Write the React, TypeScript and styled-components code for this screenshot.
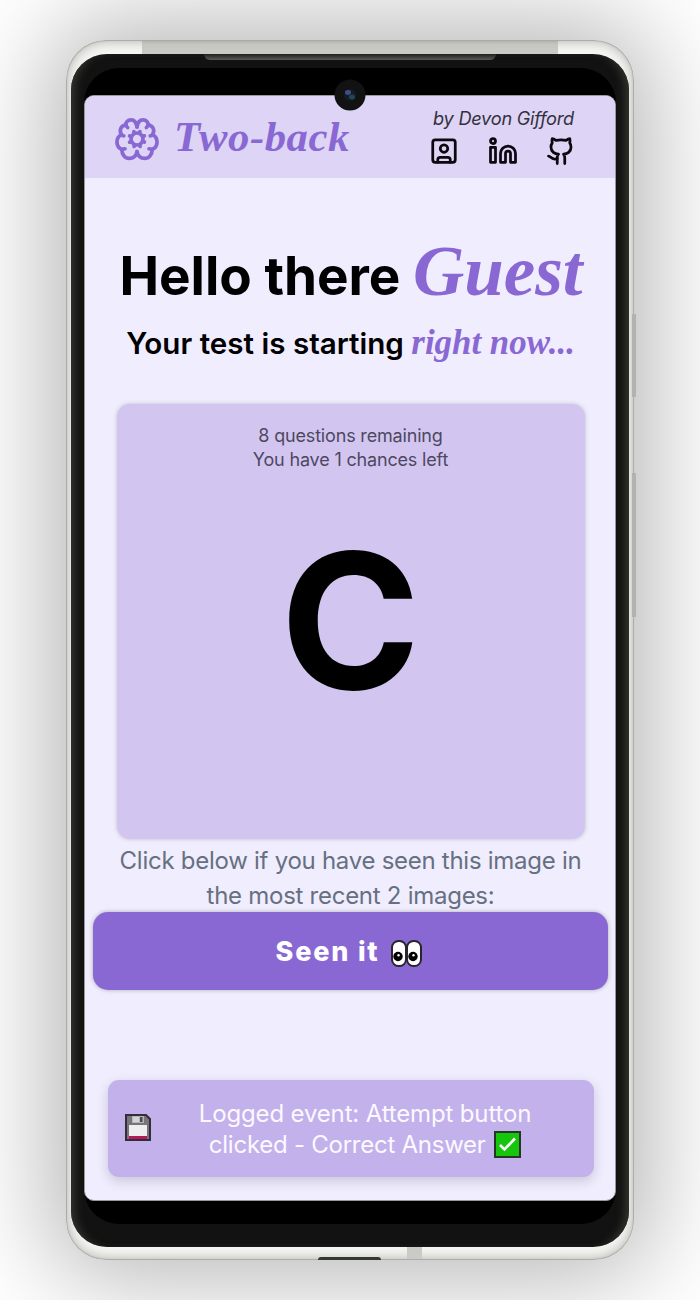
import React from 'react';
import styled, { createGlobalStyle } from 'styled-components';
import { Github, Linkedin, SquareUser } from 'lucide-react';

const GlobalStyle = createGlobalStyle`
  * { box-sizing: border-box; }
  body {
    margin: 0;
    background: #fff;
    font-family: Inter, "Liberation Sans", sans-serif;
    color: #000;
  }
  h1, h2, p { margin: 0; }
`;

const Page = styled.main`
  width: 700px;
  height: 1300px;
  padding: 40px 66px;
  overflow: hidden;
`;

const Body = styled.div`
  position: relative;
  width: 568px;
  height: 1220px;
  padding: 14px 5px 13px;
  border-radius: 40px;
  background: linear-gradient(#a5a6a1, #cacbc6 4px) 76px 0 / 416px 14px no-repeat, #f6f6f4;
  box-shadow: inset 0 0 1px 1px #a9aaa6, inset 0 0 12px 2px #b9bbb3, 0 0 100px 18px rgba(0, 0, 0, 0.29);
`;

const SideButton = styled.i<{ $top: number; $height: number }>`
  position: absolute;
  right: -2px;
  top: ${(p) => p.$top}px;
  width: 4px;
  height: ${(p) => p.$height}px;
  background: #b2b2ae;
`;

const BottomPort = styled.i`
  position: absolute;
  left: 252px;
  bottom: 0;
  width: 63px;
  height: 3px;
  border-radius: 3px 3px 0 0;
  background: #343832;
`;

const Antenna = styled.i`
  position: absolute;
  left: 341px;
  bottom: 1px;
  width: 15px;
  height: 12px;
  background: #cacbc6;
`;

const Bezel = styled.div`
  position: relative;
  height: 1193px;
  padding: 14px 13px 23px;
  border-radius: 36px;
  background: #121212;
  box-shadow: inset 9px 0 8px -5px #34352f, inset -9px 0 8px -5px #34352f;
`;

const Speaker = styled.i`
  position: absolute;
  top: 0;
  left: 133px;
  width: 292px;
  height: 6px;
  border-radius: 0 0 6px 6px;
  background: linear-gradient(#20211f, #5a5b57);
`;

const Camera = styled.svg`
  position: absolute;
  left: 263px;
  top: 25px;
  width: 32px;
  height: 32px;
`;

const Display = styled.div`
  height: 1156px;
  padding-top: 27px;
  border-radius: 35px;
  background: #000;
`;

const Screen = styled.div`
  display: flex;
  flex-direction: column;
  height: 1106px;
  border: 1px solid #99969f;
  border-width: 1px 0.5px;
  border-radius: 10px;
  overflow: hidden;
  background: #f0edff;
`;

const Content = styled.div`
  display: flex;
  flex-direction: column;
  align-items: center;
  padding-left: 1px;
`;

const Header = styled.header`
  display: flex;
  flex: none;
  justify-content: space-between;
  height: 82px;
  padding: 0 39px 0 28px;
  background: #ddd4f6;
`;

const Brand = styled.div`
  display: flex;
  align-items: center;
  gap: 13px;
  color: #8a68d3;
`;

const BrandName = styled.span`
  font: italic 700 42.7px/48px "Liberation Serif", serif;
  letter-spacing: 0.55px;
  white-space: nowrap;
`;

const Credits = styled.div`
  width: 143px;
  padding-top: 10px;
`;

const Byline = styled.p`
  font-size: 18.2px;
  line-height: 24px;
  font-style: italic;
  letter-spacing: -0.25px;
  color: #34313d;
  white-space: nowrap;
`;

const Links = styled.div`
  display: flex;
  justify-content: space-between;
  margin: 6px 0 0 -4px;
  color: #0b090f;
`;

const Accent = styled.em<{ $size: number }>`
  font: italic 700 ${(p) => p.$size}px/1 "Liberation Serif", serif;
  color: #8a68d3;
`;

const Title = styled.h1`
  height: 76px;
  margin-top: 58px;
  padding-left: 1px;
  font-size: 53px;
  line-height: 76px;
  font-weight: 700;
  white-space: nowrap;
`;

const Subtitle = styled.h2`
  height: 40px;
  margin-top: 11px;
  font-size: 29.6px;
  line-height: 40px;
  font-weight: 600;
  white-space: nowrap;
`;

const Card = styled.section`
  width: 468px;
  height: 435px;
  flex: none;
  margin-top: 41px;
  padding-top: 20px;
  border-radius: 13px;
  background: #d2c6f1;
  box-shadow: 0 0 4px rgba(80, 90, 70, 0.3);
  text-align: center;
`;

const Status = styled.p`
  font-size: 18px;
  line-height: 23.5px;
  letter-spacing: -0.17px;
  color: #4e485f;
`;

const Letter = styled.div`
  height: 240px;
  margin-top: 30px;
  font-size: 189px;
  line-height: 240px;
  font-weight: 700;
`;

const Prompt = styled.p`
  height: 73px;
  padding-top: 4px;
  font-size: 24px;
  line-height: 35px;
  letter-spacing: -0.27px;
  text-align: center;
  white-space: nowrap;
  color: #667080;
`;

const SeenButton = styled.button`
  display: flex;
  flex: none;
  align-items: center;
  justify-content: center;
  gap: 12px;
  width: 515px;
  height: 78px;
  padding: 1px 3px 0 0;
  border: 0;
  border-radius: 15px;
  background: #8a68d3;
  box-shadow: 0 0 4px rgba(70, 80, 60, 0.4);
  color: #fff;
  font: 800 27px/40px Inter, sans-serif;
  letter-spacing: 1.8px;
`;

const EyesIcon = styled.svg`
  width: 31px;
  height: 27px;
  margin-top: 4px;
`;

const Toast = styled.aside`
  display: flex;
  flex: none;
  align-items: center;
  width: 486px;
  height: 97px;
  margin-top: 90px;
  padding: 0 61px 0 17px;
  border-radius: 11px;
  background: #c3b1eb;
  box-shadow: 0 4px 12px rgba(50, 40, 60, 0.2);
  color: #fbf9ff;
`;

const ToastText = styled.p`
  flex: 1;
  margin-left: 47px;
  font-size: 24px;
  line-height: 31px;
  letter-spacing: -0.15px;
  text-align: center;
  white-space: nowrap;
`;

const ToastLine = styled.span`
  letter-spacing: -0.25px;
`;

const Check = styled.svg`
  width: 27px;
  height: 27px;
  margin-left: 2px;
  vertical-align: -5px;
`;

const BrainCogIcon = styled.svg`
  width: 48px;
  height: 48px;
  margin-top: 3px;
`;

const BrainCog = () => (
  <BrainCogIcon viewBox="0 0 24 24" fill="none" stroke="currentColor" strokeWidth="1.85" strokeLinecap="round" strokeLinejoin="round">
    <circle cx="12" cy="12" r="3" />
    <path d="m15.7 10.4-.9.4m-5.6 2.4-.9.4m5.3 2.1-.4-.9m-2.4-5.6-.4-.9m5.3 5.2-.9-.4m-5.6-2.2-.9-.4m2.2 5.2.4-.9m2.2-5.6.4-.9" />
    {[undefined, 'matrix(-1 0 0 1 24 0)'].map((transform, i) => (
      <g key={i} transform={transform}>
        <path d="M12 6C11.6 3.4 10.5 2.4 9.1 2.4 7.3 2.4 6.2 3.7 6.5 5q.1.8.8 1.3" />
        <path d="M6.5 4.9C4 5.2 2.9 7.6 4.2 9.8q.6.6 1.2.6" />
        <path d="M4.2 9.8C1.2 11.4 1.2 15.8 4.4 17.2l1.6-.3" />
        <path d="M4.4 17.2C4.4 19.8 6 21.7 8.2 21.7c1.8 0 3.3-1.1 3.8-3.4" />
      </g>
    ))}
  </BrainCogIcon>
);

const Eyes = () => (
  <EyesIcon viewBox="0 0 31 27">
    <g fill="#fff" stroke="#29242f" strokeWidth="2">
      <rect x="1" y="1" width="14" height="25" rx="6.5" />
      <rect x="16" y="1" width="14" height="25" rx="6.5" />
    </g>
    <circle cx="7" cy="16.5" r="4.7" />
    <circle cx="22" cy="16.5" r="4.7" />
    <circle cx="7.5" cy="15.2" r="1.2" fill="#fff" />
    <circle cx="22.5" cy="15.2" r="1.2" fill="#fff" />
  </EyesIcon>
);

const FloppyIcon = styled.svg`
  width: 26px;
  height: 27px;
  margin-top: -2px;
`;

const Floppy = () => (
  <FloppyIcon viewBox="0 0 26 27">
    <path d="M1 1h20l4 4v21H1z" fill="#777579" stroke="#332d3b" strokeWidth="2" />
    <path d="M7 2h12v7H7z" fill="#b6b5b7" />
    <path d="M8 3h6v5H8z" fill="#d5d4d5" />
    <path d="M15 3h2.5v5H15z" fill="#4e4b52" />
    <path d="M4 11h18v12H4z" fill="#eeeeee" />
    <path d="M4 22h18v3H4z" fill="#b51956" />
  </FloppyIcon>
);

export default function App() {
  return (
    <>
      <GlobalStyle />
      <Page>
        <Body>
          <SideButton $top={274} $height={83} />
          <SideButton $top={433} $height={144} />
          <Antenna />
          <BottomPort />
          <Bezel>
            <Speaker />
            <Display>
              <Screen>
                <Header>
                  <Brand>
                    <BrainCog />
                    <BrandName>Two-back</BrandName>
                  </Brand>
                  <Credits>
                    <Byline>by Devon Gifford</Byline>
                    <Links>
                      <SquareUser size={30} strokeWidth={2.2} />
                      <Linkedin size={30} strokeWidth={2.2} />
                      <Github size={30} strokeWidth={2.2} />
                    </Links>
                  </Credits>
                </Header>
                <Content>
                  <Title>Hello there <Accent $size={71}>Guest</Accent></Title>
                  <Subtitle>Your test is starting <Accent $size={34.9}>right now...</Accent></Subtitle>
                  <Card>
                    <Status>8 questions remaining<br />You have 1 chances left</Status>
                    <Letter>C</Letter>
                  </Card>
                  <Prompt>Click below if you have seen this image in<br />the most recent 2 images:</Prompt>
                  <SeenButton>Seen it <Eyes /></SeenButton>
                  <Toast>
                    <Floppy />
                    <ToastText>
                      Logged event: Attempt button<br />
                      <ToastLine>clicked - Correct Answer </ToastLine>
                      <Check viewBox="0 0 27 27">
                        <path d="M1 1h25v25H1z" fill="#16c60c" stroke="#26342a" strokeWidth="2" />
                        <path d="m6 14 4.5 4.5L21 7.5" fill="none" stroke="#fff" strokeWidth="2.6" />
                      </Check>
                    </ToastText>
                  </Toast>
                </Content>
              </Screen>
            </Display>
            <Camera viewBox="0 0 32 32">
              <circle cx="16" cy="16" r="15.5" fill="#121212" />
              <circle cx="16" cy="16" r="6" fill="#161b25" />
              <ellipse cx="14" cy="13.5" rx="3" ry="2.4" fill="#414d85" />
              <ellipse cx="18" cy="18" rx="3" ry="2.5" fill="#1e4a50" />
            </Camera>
          </Bezel>
        </Body>
      </Page>
    </>
  );
}
